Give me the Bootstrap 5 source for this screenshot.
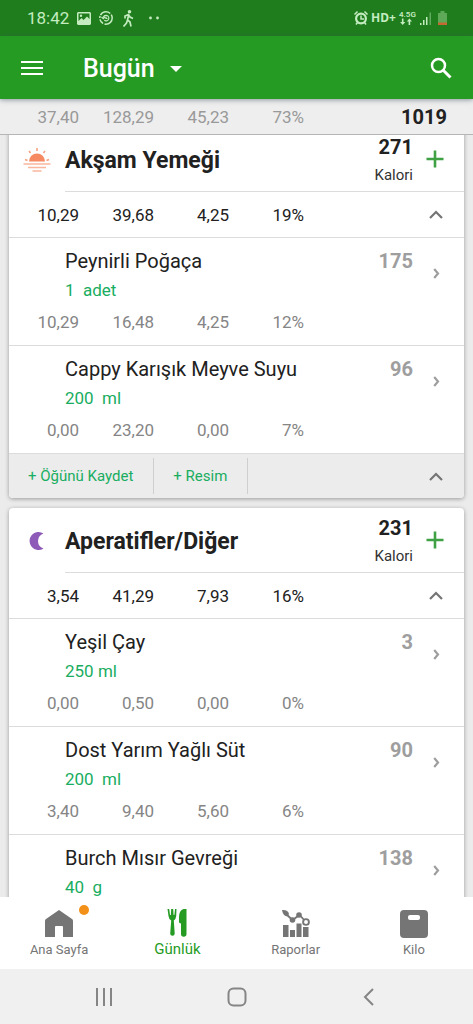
<!DOCTYPE html>
<html lang="tr">
<head>
<meta charset="utf-8">
<meta name="viewport" content="width=device-width, initial-scale=1">
<title>Günlük</title>
<link href="https://cdn.jsdelivr.net/npm/bootstrap@5.3.0/dist/css/bootstrap.min.css" rel="stylesheet">
<style>
  body { font-family: Roboto, "Noto Sans", sans-serif; background: #ebebeb; color: #212121; font-size: 17px; line-height: 24px; }
  svg { display: block; flex: none; }
  button { border: 0; background: none; padding: 0; color: inherit; }
  .status-bar { background: #1f7d1d; height: 36px; color: #c4ecc0; padding: 0 26px 0 27px; }
  .app-bar { background: #259b24; height: 63px; padding: 0 21px; box-shadow: 0 1px 5px rgba(60,80,100,.55); z-index: 2; }
  .day-title { font-size: 25px; line-height: 32px; font-weight: 500; gap: 15px; margin-left: 40px; padding-top: 2px; }
  .totals { background: #eee; height: 36px; border-bottom: 1px solid #b5b5b5; color: #999; padding: 0 26px 0 4px; }
  .total-kcal { color: #212121; font-size: 20px; font-weight: 700; }
  .cell { width: 75px; text-align: right; flex: none; }
  .meals { padding: 0 9px; gap: 10px; margin-top: -8px; }
  .diary { min-height: 0; }
  .meal { background: #fff; border-radius: 4px; box-shadow: 0 1px 4px rgba(0,0,0,.35); flex: none; overflow: hidden; }
  .meal-icon { width: 56px; padding-left: 14px; }
  .meal-head { height: 65px; }
  .meal-info { border-bottom: 1px solid #dcdcdc; height: 65px; padding-top: 2px; }
  .meal-name { font-size: 23px; line-height: 28px; font-weight: 700; margin: 0; padding-top: 2px; }
  .kcal { font-size: 20px; font-weight: 700; line-height: 24px; }
  .kcal-label { font-size: 15px; line-height: 20px; margin-top: 6px; color: #333; }
  .meal-kcal { width: 70px; text-align: right; }
  .add-btn { width: 51px; padding: 0 0 3px 13px; color: #3fa143; }
  .macros { margin-left: -5px; }
  .meal-sum { height: 46px; border-bottom: 1px solid #dcdcdc; padding-right: 21px; }
  .food { height: 108px; border-bottom: 1px solid #dcdcdc; padding-top: 9px; }
  .food-name { font-size: 20px; line-height: 28px; }
  .serving { color: #18ad60; line-height: 20px; margin-top: 5px; white-space: pre; }
  .food-text { padding-left: 56px; }
  .food .macros { color: #858585; margin-top: 10px; }
  .food-side { color: #9e9e9e; padding: 2px 24px 0 0; gap: 20px; }
  .food-side svg { margin-top: 19px; }
  .meal-foot { background: #ececec; height: 44px; color: #18ad60; font-size: 15px; padding-right: 21px; }
  .foot-btn { border-right: 1px solid #cfcfcf; height: 36px; padding: 0 20px 0 19px; }
  .grey { color: #757575; }
  .tabs { background: #fff; height: 72px; z-index: 2; }
  .tab-link { flex: 1 1 0; color: #757575; font-size: 13px; line-height: 16px; padding-top: 11px; text-decoration: none; }
  .tab-link.on { color: #259b24; font-size: 15px; }
  .tab-link span { margin-top: 4px; }
  .tab-link.on span { margin-top: 3px; }
  .dot { position: absolute; width: 10px; height: 10px; border-radius: 50%; background: #f39019; left: 34px; top: -3px; }
  .sys { background: #f0f0f0; height: 55px; color: #858585; padding: 0 8%; }
  .sys button { flex: 1 1 0; display: flex; justify-content: center; }
</style>
</head>
<body>
<svg class="d-none" xmlns="http://www.w3.org/2000/svg">
  <symbol id="up" viewBox="0 0 14 9"><path d="M1 8 7 2l6 6" fill="none" stroke="currentColor" stroke-width="2.200"/></symbol>
  <symbol id="next" viewBox="0 0 7 11"><path d="m1.200 1 3.800 4.500L1.200 10" fill="none" stroke="currentColor" stroke-width="2.200"/></symbol>
  <symbol id="plus" viewBox="0 0 18 18"><path d="M9 .5v17M.5 9h17" stroke="currentColor" stroke-width="2.600"/></symbol>
</svg>
<div class="d-flex flex-column vh-100 overflow-hidden">
  <div class="status-bar d-flex align-items-center flex-shrink-0">
    <span>18:42</span>
    <svg class="ms-2" width="14" height="13" viewBox="0 0 14 13"><path fill="currentColor" fill-rule="evenodd" d="M1 0h12l1 1v11l-1 1H1l-1-1V1zM1.500 1.500v7.500l3-3 2 2 3.500-3.500 2.500 2.500V1.500zM4 2.500a1.200 1.200 0 1 1 0 2.400 1.200 1.200 0 0 1 0-2.400z"/></svg>
    <svg class="ms-2" width="14" height="14" viewBox="0 0 14 14" fill="none" stroke="currentColor"><circle cx="7" cy="7" r="6.200" stroke-width="1.500" stroke-dasharray="11 1.500 5 1.500 2 1"/><path d="M4.300 6.500a2.800 2.800 0 1 1 1 2.800M2.500 6l1.800 1.600L6 6M7 5.500V7.500h1.500" stroke-width="1.200"/></svg>
    <svg class="ms-2" width="16" height="17" viewBox="-1 0 16 17" fill="none" stroke="currentColor" stroke-width="1.700"><circle cx="7.500" cy="1.800" r="1.800" fill="currentColor" stroke="none"/><path d="M3 8.500V6l3.500-1.500L8 7l3 1.500M6.800 4.500 5.500 10l2.500 2 1 4.500M5.500 10 4.500 13 1.500 16.500"/></svg>
    <svg class="ms-2" width="16" height="4" viewBox="-4 0 16 4" fill="currentColor"><circle cx="1.500" cy="2" r="1.400"/><circle cx="8.500" cy="2" r="1.400"/></svg>
    <svg class="ms-auto" width="93" height="18" viewBox="0 0 93 18" fill="currentColor" font-family="Noto Sans, sans-serif">
      <circle cx="7" cy="9.500" r="4.900" fill="none" stroke="currentColor" stroke-width="2.200"/><path d="M7 6.500V10h3M.500 5.500l3-3M13.500 5.500l-3-3M3.500 13.500 2 15.500M10.500 13.500l1.500 2" fill="none" stroke="currentColor" stroke-width="1.500"/>
      <text x="17" y="13" font-size="12" font-weight="700">HD+</text>
      <text x="45" y="8" font-size="8" font-weight="600" font-family="Roboto, sans-serif">4.5G</text>
      <path d="M49.500 9.500v3.500h1.800L48.700 16l-2.600-3h1.800V9.500zM54.600 16v-3.500h-1.800l2.600-3 2.600 3h-1.800V16z"/>
      <path d="M66 14h1.500v2H66zM69 11h1.500v5H69zM72 8h1.500v8H72z"/><path d="M75.500 3.500H77V16h-1.500z" opacity=".4"/>
      <path d="M84 4h2.500V2h4v2H93v10h-9V4z" fill="#5da957"/><path d="M84 13.500h9V16h-9z" fill="#c26a31"/>
    </svg>
  </div>
  <header class="app-bar d-flex align-items-center flex-shrink-0 text-white">
    <button aria-label="Menü"><svg width="22" height="16" viewBox="0 0 22 16"><path d="M0 2h22M0 8h22M0 14h22" stroke="#fff" stroke-width="2.200"/></svg></button>
    <button class="day-title d-flex align-items-center">Bugün<svg width="12" height="6" viewBox="0 0 12 6"><path d="M0 0h12L6 6z" fill="#fff"/></svg></button>
    <button class="ms-auto" aria-label="Ara"><svg width="22" height="22" viewBox="0 0 22 22" fill="none" stroke="#fff"><circle cx="8.500" cy="8.500" r="6.500" stroke-width="2.500"/><path d="m13 13 7.500 7.500" stroke-width="3"/></svg></button>
  </header>
  <div class="totals d-flex align-items-center flex-shrink-0">
    <span class="cell">37,40</span><span class="cell">128,29</span><span class="cell">45,23</span><span class="cell">73%</span>
    <span class="total-kcal ms-auto">1019</span>
  </div>
  <main class="diary flex-grow-1 overflow-hidden">
    <div class="meals d-flex flex-column">
      <section class="meal">
        <div class="meal-head d-flex">
          <div class="meal-icon d-flex align-items-center"><svg width="28" height="26" viewBox="0 0 28 26"><path d="M6 14.500a8 8 0 0 1 16 0z" fill="#f58a63"/><path d="M.500 17h27M5 20.500h18M9.500 24h9" stroke="#f9b79d" stroke-width="1.500"/><path d="M14 1v3M6 4l1.500 2M22 4l-1.500 2M2 12.500l2.500 1M26 12.500l-2.500 1" stroke="#f5a27f" stroke-width="1.600"/></svg></div>
          <div class="meal-info d-flex flex-grow-1 align-items-center">
            <h2 class="meal-name flex-grow-1">Akşam Yemeği</h2>
            <div class="meal-kcal"><div class="kcal">271</div><div class="kcal-label">Kalori</div></div>
            <button class="add-btn" aria-label="Ekle"><svg width="18" height="18"><use href="#plus"/></svg></button>
          </div>
        </div>
        <div class="meal-sum d-flex align-items-center">
          <div class="macros d-flex"><span class="cell">10,29</span><span class="cell">39,68</span><span class="cell">4,25</span><span class="cell">19%</span></div>
          <button class="ms-auto grey" aria-label="Daralt"><svg width="14" height="9"><use href="#up"/></svg></button>
        </div>
        <div class="food">
          <div class="d-flex"><div class="food-text flex-grow-1"><div class="food-name">Peynirli Poğaça</div><div class="serving">1  adet</div></div>
          <div class="food-side d-flex"><span class="kcal">175</span><svg width="7" height="11"><use href="#next"/></svg></div></div>
          <div class="macros d-flex"><span class="cell">10,29</span><span class="cell">16,48</span><span class="cell">4,25</span><span class="cell">12%</span></div>
        </div>
        <div class="food">
          <div class="d-flex"><div class="food-text flex-grow-1"><div class="food-name">Cappy Karışık Meyve Suyu</div><div class="serving">200  ml</div></div>
          <div class="food-side d-flex"><span class="kcal">96</span><svg width="7" height="11"><use href="#next"/></svg></div></div>
          <div class="macros d-flex"><span class="cell">0,00</span><span class="cell">23,20</span><span class="cell">0,00</span><span class="cell">7%</span></div>
        </div>
        <div class="meal-foot d-flex align-items-center">
          <button class="foot-btn">+ Öğünü Kaydet</button><button class="foot-btn">+ Resim</button>
          <button class="ms-auto grey" aria-label="Daralt"><svg width="14" height="9"><use href="#up"/></svg></button>
        </div>
      </section>
      <section class="meal">
        <div class="meal-head d-flex">
          <div class="meal-icon d-flex align-items-center"><svg width="28" height="20" viewBox="0 0 28 20"><path d="M20.500 2.500A9 9 0 1 0 20.500 17.500Q15 15.500 15 10Q15 4.500 20.500 2.500z" fill="#8e5bb8"/></svg></div>
          <div class="meal-info d-flex flex-grow-1 align-items-center">
            <h2 class="meal-name flex-grow-1">Aperatifler/Diğer</h2>
            <div class="meal-kcal"><div class="kcal">231</div><div class="kcal-label">Kalori</div></div>
            <button class="add-btn" aria-label="Ekle"><svg width="18" height="18"><use href="#plus"/></svg></button>
          </div>
        </div>
        <div class="meal-sum d-flex align-items-center">
          <div class="macros d-flex"><span class="cell">3,54</span><span class="cell">41,29</span><span class="cell">7,93</span><span class="cell">16%</span></div>
          <button class="ms-auto grey" aria-label="Daralt"><svg width="14" height="9"><use href="#up"/></svg></button>
        </div>
        <div class="food">
          <div class="d-flex"><div class="food-text flex-grow-1"><div class="food-name">Yeşil Çay</div><div class="serving">250 ml</div></div>
          <div class="food-side d-flex"><span class="kcal">3</span><svg width="7" height="11"><use href="#next"/></svg></div></div>
          <div class="macros d-flex"><span class="cell">0,00</span><span class="cell">0,50</span><span class="cell">0,00</span><span class="cell">0%</span></div>
        </div>
        <div class="food">
          <div class="d-flex"><div class="food-text flex-grow-1"><div class="food-name">Dost Yarım Yağlı Süt</div><div class="serving">200  ml</div></div>
          <div class="food-side d-flex"><span class="kcal">90</span><svg width="7" height="11"><use href="#next"/></svg></div></div>
          <div class="macros d-flex"><span class="cell">3,40</span><span class="cell">9,40</span><span class="cell">5,60</span><span class="cell">6%</span></div>
        </div>
        <div class="food">
          <div class="d-flex"><div class="food-text flex-grow-1"><div class="food-name">Burch Mısır Gevreği</div><div class="serving">40  g</div></div>
          <div class="food-side d-flex"><span class="kcal">138</span><svg width="7" height="11"><use href="#next"/></svg></div></div>
        </div>
      </section>
    </div>
  </main>
  <nav class="tabs d-flex flex-shrink-0" aria-label="Ana gezinme">
    <a href="#" class="tab-link d-flex flex-column align-items-center"><div class="position-relative"><svg width="28" height="30" viewBox="0 0 28 30"><path d="M14 2 27 11q1 .7 1 2v16H18V19q0-1-1-1h-6q-1 0-1 1v10H0V13q0-1.300 1-2z" fill="currentColor"/></svg><i class="dot"></i></div><span>Ana Sayfa</span></a>
    <a href="#" class="tab-link on d-flex flex-column align-items-center" aria-current="page"><svg width="20" height="30" viewBox="0 0 20 30" fill="currentColor"><path d="M.500 1 1.500 8q.3 3 2.700 4.500l-1 13a2 2 0 0 0 4.500 0L6.800 12.500Q9 11 9.200 8L9.500 1H8L7.400 7h-.8L6.200 1H4.200L3.800 7H3L2.200 1zM19.500 1h-3Q12 2.500 12 9v5q0 1 2 1.500V26a2.700 2.700 0 0 0 5.500 0z"/></svg><span>Günlük</span></a>
    <a href="#" class="tab-link d-flex flex-column align-items-center"><svg width="28" height="30" viewBox="0 0 28 30" fill="currentColor"><path d="M1 17h5.500v12H1zM8 22h5v7H8zM14.500 15.500h5V29h-5zM21 19h5.500v10H21z"/><path d="M3 5l7.500 7 7-5 6.500 7" fill="none" stroke="currentColor" stroke-width="1.800"/><path d="M0 2q6-.5 7 4L5.500 8.500Q1 8 0 2z"/><circle cx="10.500" cy="12" r="2.800"/><circle cx="17" cy="7" r="2.800"/><circle cx="24" cy="14" r="2.900" fill="#fff" stroke="currentColor" stroke-width="1.900"/></svg><span>Raporlar</span></a>
    <a href="#" class="tab-link d-flex flex-column align-items-center"><svg width="28" height="30" viewBox="0 0 28 30"><rect y="2" width="28" height="28" rx="4" fill="currentColor"/><rect x="8" y="7" width="12" height="5" rx="2" fill="#fff"/></svg><span>Kilo</span></a>
  </nav>
  <div class="sys d-flex flex-shrink-0 align-items-center">
    <button aria-label="Son uygulamalar"><svg width="18" height="18" viewBox="0 0 18 18"><path d="M2 0v18M9 0v18M16 0v18" stroke="currentColor" stroke-width="2"/></svg></button>
    <button aria-label="Ana ekran"><svg width="20" height="20" viewBox="0 0 20 20"><rect x="1.500" y="1.500" width="17" height="17" rx="5" fill="none" stroke="currentColor" stroke-width="2"/></svg></button>
    <button aria-label="Geri"><svg width="12" height="18" viewBox="0 0 12 18"><path d="m10 1-8 8 8 8" fill="none" stroke="currentColor" stroke-width="2"/></svg></button>
  </div>
</div>
<script src="https://cdn.jsdelivr.net/npm/bootstrap@5.3.0/dist/js/bootstrap.bundle.min.js"></script>
</body>
</html>
